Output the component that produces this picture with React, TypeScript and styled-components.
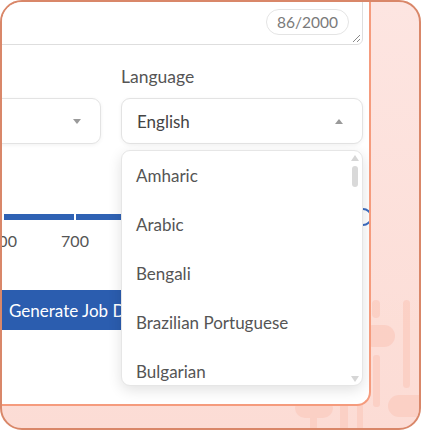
import styled, { createGlobalStyle } from "styled-components";

const GlobalStyle = createGlobalStyle`
  html, body { margin: 0; padding: 0; background: #fff; }
  body { font-family: Lato, "Liberation Sans", sans-serif; }
  * { box-sizing: border-box; }
`;

const Frame = styled.div`
  position: relative;
  width: 421px;
  height: 430px;
  border: 2px solid #d98769;
  border-radius: 22px;
  overflow: hidden;
  background: linear-gradient(180deg, #fde5e1 0%, #fcdcd5 100%);
  display: flex;
  align-items: flex-start;
`;

const Decor = styled.svg`
  position: absolute;
  inset: 0;
  z-index: 0;
`;

const Card = styled.div`
  position: relative;
  z-index: 1;
  width: 369px;
  height: 404px;
  background: #fff;
  border-right: 2px solid #f59b7d;
  border-bottom: 2px solid #f59b7d;
  border-bottom-right-radius: 14px;
  overflow: hidden;
`;

const Content = styled.div`
  width: 504px;
  margin-left: -143px;
  margin-top: -57px;
  display: flex;
  flex-direction: column;
`;

const TextBox = styled.div`
  position: relative;
  height: 100px;
  border: 1px solid #dedede;
  border-radius: 6px;
`;

const Counter = styled.span`
  position: absolute;
  right: 13px;
  bottom: 9px;
  height: 26px;
  padding: 0 10px;
  display: flex;
  align-items: center;
  border: 1px solid #e4e4e4;
  border-radius: 13px;
  font-size: 15.5px;
  color: #7a7a7a;
`;

const Grip = styled.svg`
  position: absolute;
  right: 1px;
  bottom: 1px;
`;

const FieldRow = styled.div`
  display: grid;
  grid-template-columns: 1fr 1fr;
  gap: 20px;
  margin-top: 22px;
`;

const Field = styled.div`
  display: flex;
  flex-direction: column;
`;

const Label = styled.div`
  height: 20px;
  line-height: 20px;
  font-size: 17.5px;
  color: #555;
  margin-bottom: 11px;
`;

const SelectWrap = styled.div`
  position: relative;
`;

const SelectBox = styled.div`
  height: 46px;
  border: 1px solid #e3e3e3;
  border-radius: 9px;
  box-shadow: 0 1px 4px rgba(0, 0, 0, 0.06);
  background: #fff;
  display: flex;
  align-items: center;
  justify-content: space-between;
  padding: 0 15px 0 15px;
  font-size: 17px;
  color: #444;
`;

const Caret = styled.span<{ $up?: boolean }>`
  width: 0;
  height: 0;
  border-left: 4px solid transparent;
  border-right: 4px solid transparent;
  ${(p) =>
    p.$up
      ? "border-bottom: 5px solid #9a9a9a;"
      : "border-top: 5px solid #9a9a9a;"}
  margin-right: 4px;
`;

const Menu = styled.div`
  position: absolute;
  z-index: 5;
  top: calc(100% + 6px);
  left: 0;
  right: 0;
  height: 236px;
  background: #fff;
  border: 1px solid #e6e6e6;
  border-radius: 9px;
  box-shadow: 0 4px 14px rgba(0, 0, 0, 0.12);
  overflow: hidden;
`;

const MenuList = styled.ul`
  list-style: none;
  margin: 0;
  padding: 0;
`;

const MenuItem = styled.li`
  height: 49px;
  display: flex;
  align-items: center;
  padding-left: 14px;
  font-size: 17px;
  color: #555;
`;

const ScrollTrack = styled.div`
  position: absolute;
  top: 0;
  right: 0;
  bottom: 0;
  width: 14px;
  display: flex;
  flex-direction: column;
  align-items: center;
  justify-content: space-between;
  padding: 4px 0 3px;
`;

const ScrollThumb = styled.div`
  position: absolute;
  top: 15px;
  right: 4px;
  width: 6px;
  height: 21px;
  border-radius: 3px;
  background: #d9d9d9;
`;

const Arrow = styled.span<{ $down?: boolean }>`
  width: 0;
  height: 0;
  border-left: 4px solid transparent;
  border-right: 4px solid transparent;
  ${(p) =>
    p.$down
      ? "border-top: 6px solid #d6d6d6;"
      : "border-bottom: 6px solid #d6d6d6;"}
`;

const Slider = styled.div`
  position: relative;
  height: 20px;
  margin-top: 63px;
  display: flex;
  align-items: center;
`;

const Track = styled.div`
  position: relative;
  width: 100%;
  height: 6px;
  border-radius: 3px;
  background: #2f62b4;
`;

const Tick = styled.span`
  position: absolute;
  top: 0;
  width: 2px;
  height: 6px;
  margin-left: -1px;
  background: #fff;
`;

const Thumb = styled.span`
  position: absolute;
  top: 1px;
  width: 18px;
  height: 18px;
  margin-left: -9px;
  border-radius: 50%;
  background: #fff;
  border: 2px solid #3c6dc1;
`;

const Marks = styled.div`
  position: relative;
  height: 20px;
  margin-top: 4px;
`;

const MarkLabel = styled.span`
  position: absolute;
  top: 0;
  transform: translateX(-50%);
  font-size: 16px;
  line-height: 20px;
  color: #555;
`;

const ButtonRow = styled.div`
  display: flex;
  padding-left: 134px;
  margin-top: 39px;
`;

const Button = styled.button`
  height: 40px;
  padding: 0 16px;
  border: none;
  border-radius: 4px;
  background: #2b5daf;
  color: #fff;
  font-family: inherit;
  font-size: 17px;
`;

const languages = ["Amharic", "Arabic", "Bengali", "Brazilian Portuguese", "Bulgarian", "Burmese"];
const min = 400;
const max = 1100;
const value = 1100;
const marks = [400, 500, 600, 700, 800, 900, 1000];
const pct = (v: number) => ((v - min) / (max - min)) * 100;

export default function App() {
  return (
    <>
      <GlobalStyle />
      <Frame>
        <Decor viewBox="2 2 417 426" width="417" height="426">
          <g fill="#fbcabe" opacity="0.7">
            <rect x="372" y="300" width="8" height="18" rx="4" />
            <rect x="362" y="325" width="33" height="22" rx="11" />
            <rect x="373" y="355" width="7" height="52" rx="3" />
            <rect x="403" y="300" width="7" height="88" rx="3.5" />
            <rect x="388" y="395" width="44" height="22" rx="11" />
            <rect x="295" y="398" width="38" height="20" rx="10" />
            <rect x="310" y="418" width="7" height="14" />
            <rect x="340" y="405" width="8" height="25" />
            <rect x="357" y="405" width="6" height="25" />
          </g>
        </Decor>
        <Card>
          <Content>
            <TextBox>
              <Counter>86/2000</Counter>
              <Grip width="10" height="10" viewBox="0 0 10 10">
                <path d="M9 2 L2 9 M9 6 L6 9" stroke="#888" strokeWidth="1" fill="none" />
              </Grip>
            </TextBox>
            <FieldRow>
              <Field>
                <Label>Tone</Label>
                <SelectBox>
                  <span>Professional</span>
                  <Caret />
                </SelectBox>
              </Field>
              <Field>
                <Label>Language</Label>
                <SelectWrap>
                  <SelectBox>
                    <span>English</span>
                    <Caret $up />
                  </SelectBox>
                  <Menu>
                    <MenuList>
                      {languages.map((l) => (
                        <MenuItem key={l}>{l}</MenuItem>
                      ))}
                    </MenuList>
                    <ScrollTrack>
                      <Arrow />
                      <Arrow $down />
                    </ScrollTrack>
                    <ScrollThumb />
                  </Menu>
                </SelectWrap>
              </Field>
            </FieldRow>
            <Slider>
              <Track>
                {marks.slice(1).map((m) => (
                  <Tick key={m} style={{ left: `${pct(m)}%` }} />
                ))}
              </Track>
              <Thumb style={{ left: `${pct(value)}%` }} />
            </Slider>
            <Marks>
              {marks.map((m) => (
                <MarkLabel key={m} style={{ left: `${pct(m)}%` }}>
                  {m}
                </MarkLabel>
              ))}
            </Marks>
            <ButtonRow>
              <Button>Generate Job Description</Button>
            </ButtonRow>
          </Content>
        </Card>
      </Frame>
    </>
  );
}
